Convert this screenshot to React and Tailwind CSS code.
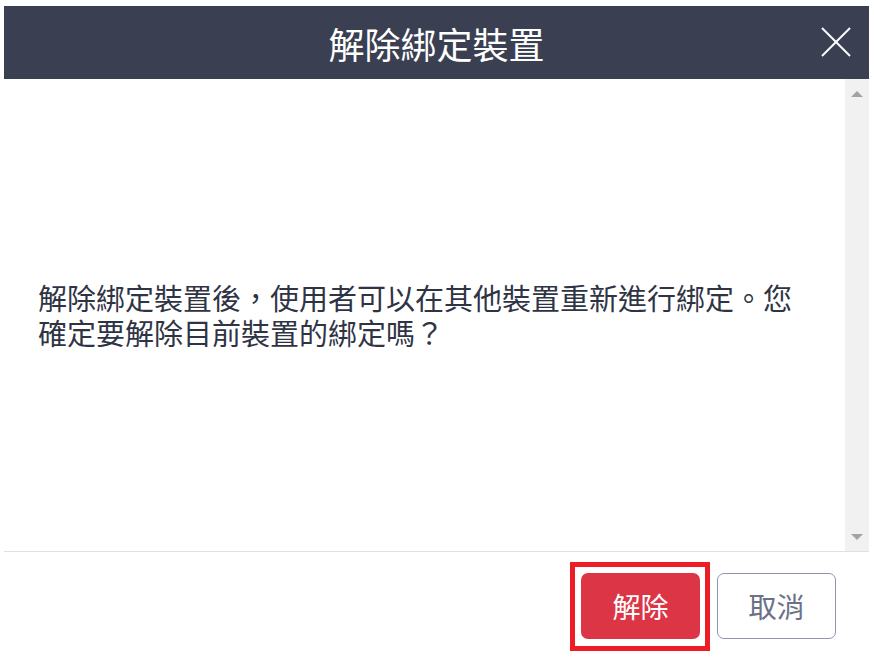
import React from "react";

const font = { fontFamily: '"Noto Sans CJK TC", "Noto Sans", sans-serif' };

const CloseIcon = () => (
	<svg width="30" height="30" viewBox="0 0 30 30" fill="none" stroke="white" strokeWidth="2">
		<line x1="1" y1="1" x2="29" y2="29" />
		<line x1="29" y1="1" x2="1" y2="29" />
	</svg>
);

const App = () => {
	return (
		<div className="w-[874px] h-[665px] bg-white pt-[6px] pl-[4px]" style={font}>
			<div className="w-[865px]">
				{/* header */}
				<header className="relative h-[73px] bg-[#3a4052] flex items-center justify-center">
					<h1 className="text-white text-[36px] leading-none">解除綁定裝置</h1>
					<button className="absolute right-[18px] top-[21px]">
						<CloseIcon />
					</button>
				</header>
				{/* body */}
				<div className="flex h-[472px]">
					<section className="flex-1 flex items-center pl-[34px] pr-[40px]">
						<p className="text-[#2f3445] text-[29px] leading-[35px]">
							解除綁定裝置後，使用者可以在其他裝置重新進行綁定。您確定要解除目前裝置的綁定嗎？
						</p>
					</section>
					<div className="w-[24px] bg-[#f1f1f1] flex flex-col justify-between items-center pt-[12px] pb-[11px]">
						<span className="w-0 h-0 border-x-[6px] border-x-transparent border-b-[6px] border-b-[#a3a3a3]" />
						<span className="w-0 h-0 border-x-[6px] border-x-transparent border-t-[6px] border-t-[#a3a3a3]" />
					</div>
				</div>
				{/* footer */}
				<footer className="border-t border-[#dee2e6] flex justify-end gap-[17px] pt-[21px] pr-[33px]">
					<button className="relative w-[119px] h-[66px] rounded-[7px] bg-[#dc3545] text-white text-[28px]">
						解除
						<span className="absolute -top-[11px] -left-[11px] -right-[10px] -bottom-[12px] border-[5px] border-[#ee1c25]" />
					</button>
					<button className="w-[119px] h-[66px] rounded-[7px] border border-[#8e96aa] bg-white text-[#6b7287] text-[28px]">
						取消
					</button>
				</footer>
			</div>
		</div>
	);
};

export default App;
